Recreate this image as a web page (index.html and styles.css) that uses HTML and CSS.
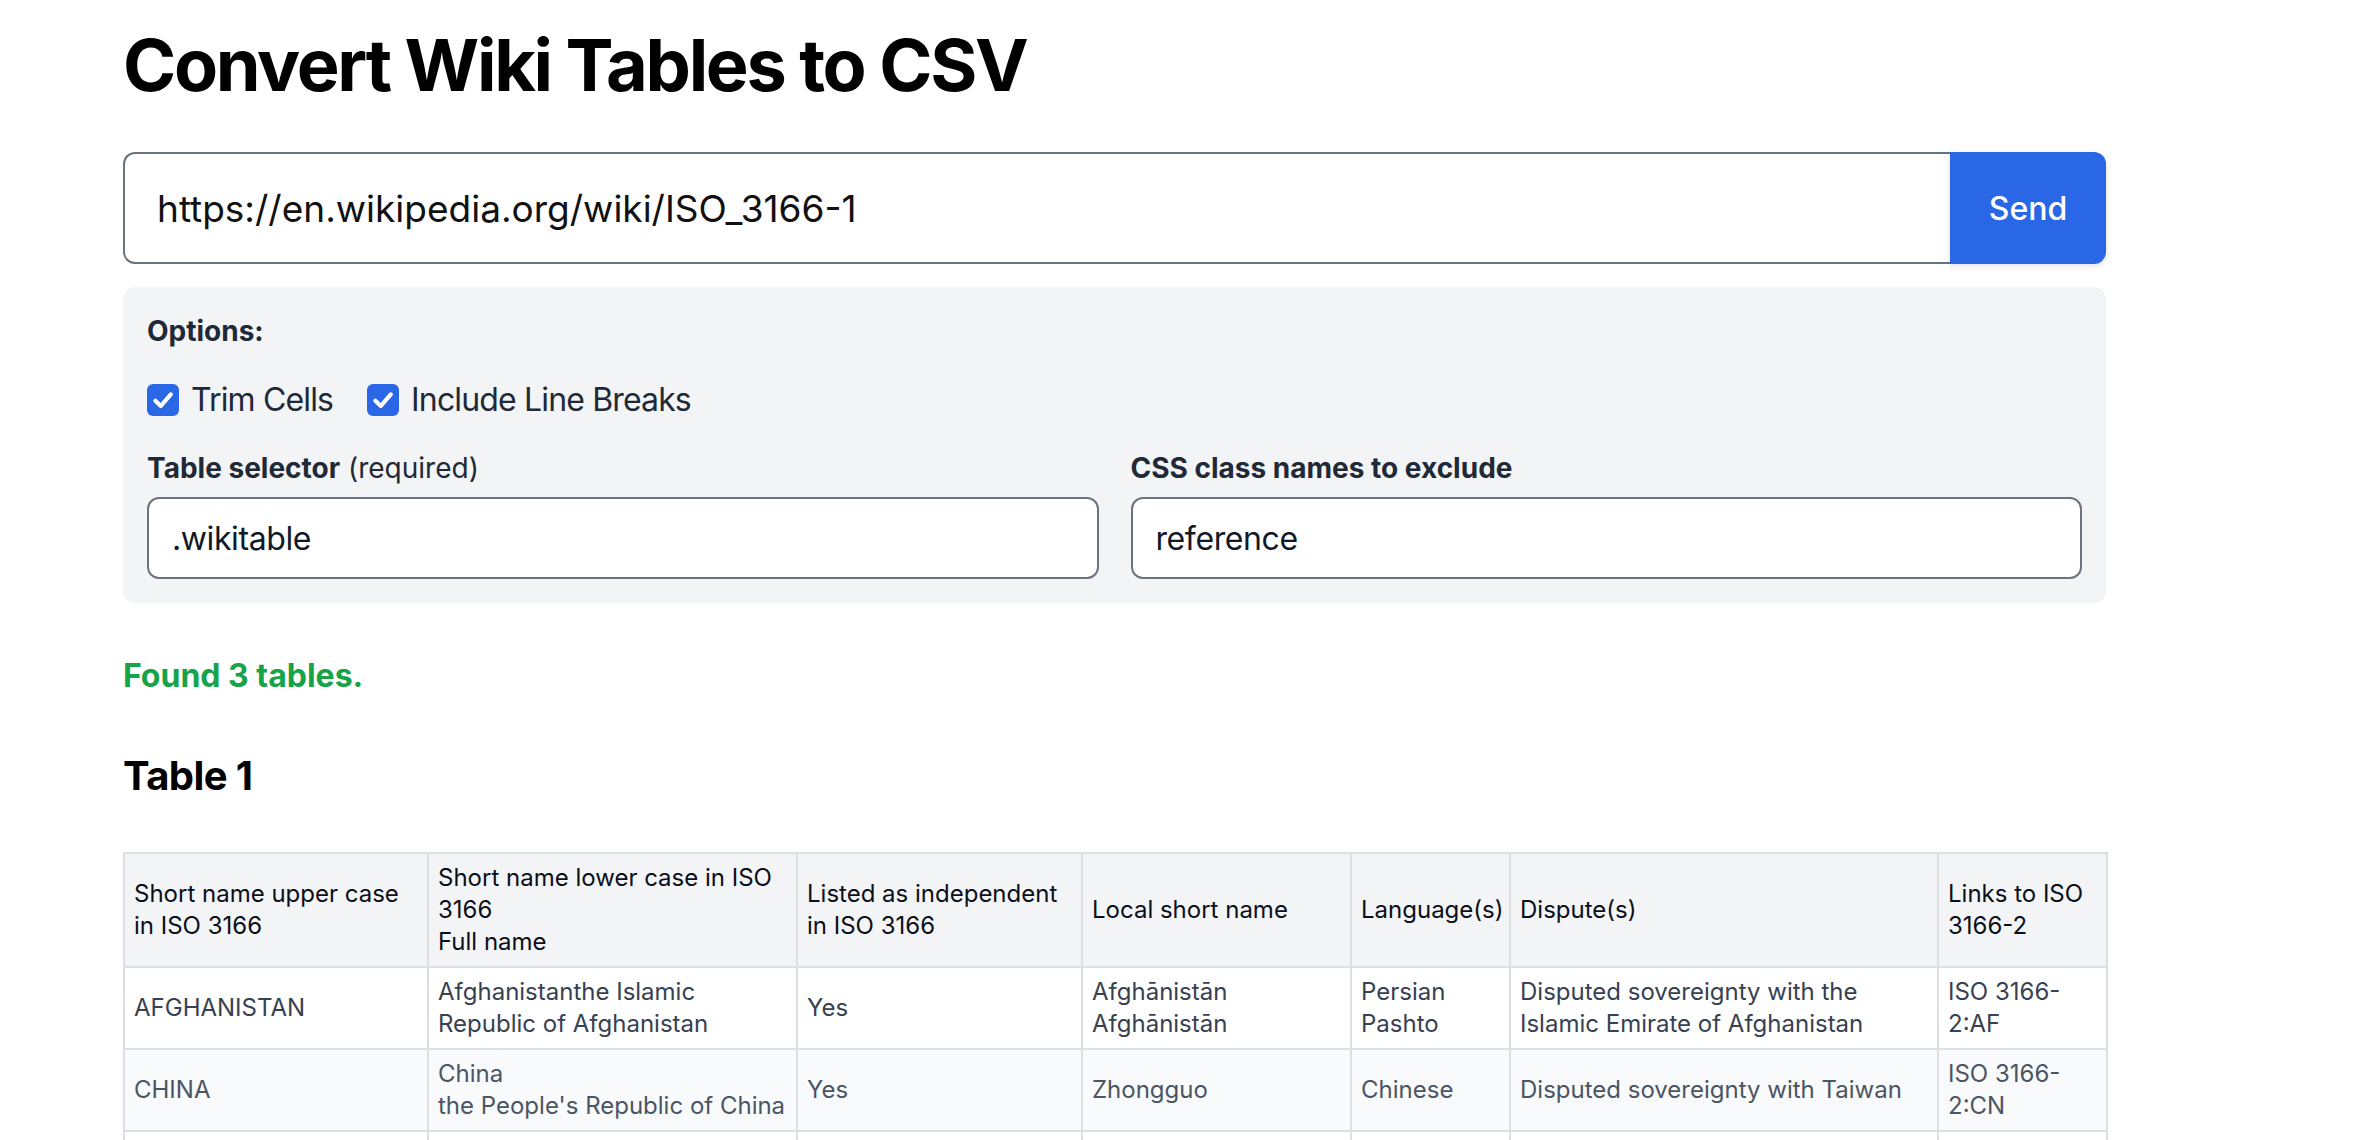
FILE: index.html
```html
<!DOCTYPE html>
<html lang="en">
<head>
<meta charset="utf-8">
<title>Convert Wiki Tables to CSV</title>
<link rel="stylesheet" href="styles.css">
</head>
<body>
<main class="page">
  <h1 class="title">Convert Wiki Tables to CSV</h1>

  <form class="url-form">
    <input class="url-input" type="text" value="https://en.wikipedia.org/wiki/ISO_3166-1">
    <button class="send-btn" type="button">Send</button>
  </form>

  <section class="options">
    <div class="options-title">Options:</div>
    <div class="checks">
      <label class="check">
        <span class="box"><svg viewBox="0 0 16 16" width="32" height="32"><path d="M4.2 8.4 L6.9 11 L11.9 5.2" fill="none" stroke="#fff" stroke-width="2.1" stroke-linecap="round" stroke-linejoin="round"/></svg></span>
        <span class="check-text">Trim Cells</span>
      </label>
      <label class="check">
        <span class="box"><svg viewBox="0 0 16 16" width="32" height="32"><path d="M4.2 8.4 L6.9 11 L11.9 5.2" fill="none" stroke="#fff" stroke-width="2.1" stroke-linecap="round" stroke-linejoin="round"/></svg></span>
        <span class="check-text">Include Line Breaks</span>
      </label>
    </div>
    <div class="fields">
      <div class="field">
        <label class="field-label"><strong>Table selector</strong> (required)</label>
        <input class="field-input" type="text" value=".wikitable">
      </div>
      <div class="field">
        <label class="field-label"><strong>CSS class names to exclude</strong></label>
        <input class="field-input" type="text" value="reference">
      </div>
    </div>
  </section>

  <p class="status">Found 3 tables.</p>

  <h2 class="table-title">Table 1</h2>

  <table class="data">
    <colgroup>
      <col class="c1"><col class="c2"><col class="c3"><col class="c4"><col class="c5"><col class="c6"><col class="c7">
    </colgroup>
    <thead>
      <tr>
        <th>Short name upper case in ISO 3166</th>
        <th>Short name lower case in ISO 3166<br>Full name</th>
        <th>Listed as independent in ISO 3166</th>
        <th>Local short name</th>
        <th>Language(s)</th>
        <th>Dispute(s)</th>
        <th>Links to ISO 3166-2</th>
      </tr>
    </thead>
    <tbody>
      <tr>
        <td>AFGHANISTAN</td>
        <td>Afghanistanthe Islamic Republic of Afghanistan</td>
        <td>Yes</td>
        <td>Afghānistān<br>Afghānistān</td>
        <td>Persian<br>Pashto</td>
        <td>Disputed sovereignty with the Islamic Emirate of Afghanistan</td>
        <td>ISO 3166-2:AF</td>
      </tr>
      <tr>
        <td>CHINA</td>
        <td>China<br>the People's Republic of China</td>
        <td>Yes</td>
        <td>Zhongguo</td>
        <td>Chinese</td>
        <td>Disputed sovereignty with Taiwan</td>
        <td>ISO 3166-2:CN</td>
      </tr>
      <tr>
        <td>CYPRUS</td>
        <td>Cyprus<br>the Republic of Cyprus</td>
        <td>Yes</td>
        <td>Kýpros<br>Kıbrıs</td>
        <td>Greek<br>Turkish</td>
        <td>Disputed sovereignty with Northern Cyprus</td>
        <td>ISO 3166-2:CY</td>
      </tr>
    </tbody>
  </table>
</main>
</body>
</html>
```

FILE: styles.css
```css
* {
  box-sizing: border-box;
}

html, body {
  margin: 0;
  padding: 0;
  background: #ffffff;
}

body {
  font-family: Inter, "Noto Sans", "Liberation Sans", sans-serif;
  color: #111827;
}

.page {
  width: 1983px;
  margin-left: 123px;
  padding-top: 25px;
}

.title {
  margin: 0;
  font-size: 72px;
  line-height: 80px;
  font-weight: 700;
  color: #000000;
  letter-spacing: -2.3px;
}

.url-form {
  display: flex;
  height: 112px;
  margin: 47px 0 0 0;
}

.url-input {
  flex: 1;
  min-width: 0;
  height: 112px;
  border: 2px solid #6b7280;
  border-right: none;
  border-radius: 12px 0 0 12px;
  padding: 0 32px;
  font-family: Inter, "Noto Sans", sans-serif;
  font-size: 37px;
  color: #111111;
  background: #ffffff;
  outline: none;
}

.send-btn {
  width: 156px;
  height: 112px;
  border: none;
  border-radius: 0 12px 12px 0;
  background: #2a67e6;
  color: #ffffff;
  font-family: Inter, "Noto Sans", sans-serif;
  font-size: 32px;
  font-weight: 500;
  box-shadow: 0 2px 6px rgba(0, 0, 0, 0.12);
}

.options {
  margin-top: 23px;
  background: #f3f4f6;
  border-radius: 12px;
  padding: 24px;
  color: #1f2937;
}

.options-title {
  font-size: 28px;
  line-height: 40px;
  font-weight: 700;
}

.checks {
  display: flex;
  align-items: center;
  gap: 34px;
  margin-top: 25px;
  height: 48px;
}

.check {
  display: flex;
  align-items: center;
  gap: 12px;
}

.box {
  width: 32px;
  height: 32px;
  border-radius: 6px;
  background: #2a67e6;
  display: flex;
  align-items: center;
  justify-content: center;
}

.box svg {
  display: block;
}

.check-text {
  font-size: 32px;
  line-height: 48px;
  letter-spacing: -0.85px;
}

.fields {
  display: grid;
  grid-template-columns: 1fr 1fr;
  gap: 32px;
  margin-top: 24px;
}

.field {
  display: flex;
  flex-direction: column;
}

.field-label {
  font-size: 28px;
  line-height: 40px;
  margin-bottom: 9px;
}

.field-label strong {
  font-weight: 700;
}

.field-input {
  height: 82px;
  border: 2px solid #6b7280;
  border-radius: 12px;
  padding: 0 23px;
  font-family: Inter, "Noto Sans", sans-serif;
  font-size: 32px;
  letter-spacing: -0.4px;
  color: #111827;
  background: #ffffff;
  outline: none;
}

.status {
  margin: 49px 0 0 0;
  font-size: 32px;
  line-height: 48px;
  font-weight: 700;
  color: #16a34a;
}

.table-title {
  margin: 48px 0 0 0;
  font-size: 40px;
  line-height: 56px;
  font-weight: 700;
  color: #000000;
  letter-spacing: -0.6px;
}

.data {
  margin-top: 48px;
  width: 1983px;
  border-collapse: collapse;
  table-layout: fixed;
  border: 2px solid #d1d5db;
  font-size: 24px;
  line-height: 32px;
}

.c1 { width: 304px; }
.c2 { width: 369px; }
.c3 { width: 285px; }
.c4 { width: 269px; }
.c5 { width: 159px; }
.c6 { width: 428px; }
.c7 { width: 169px; }

.data th,
.data td {
  border: 2px solid #dcdfe4;
  padding: 8px 9px;
  text-align: left;
  vertical-align: middle;
}

.data th {
  background: #f3f4f6;
  font-weight: 400;
  color: #0b0f19;
}

.data td {
  color: #374151;
}

.data tbody tr:nth-child(even) td {
  background: #f9fafb;
  color: #4b5563;
}
```
